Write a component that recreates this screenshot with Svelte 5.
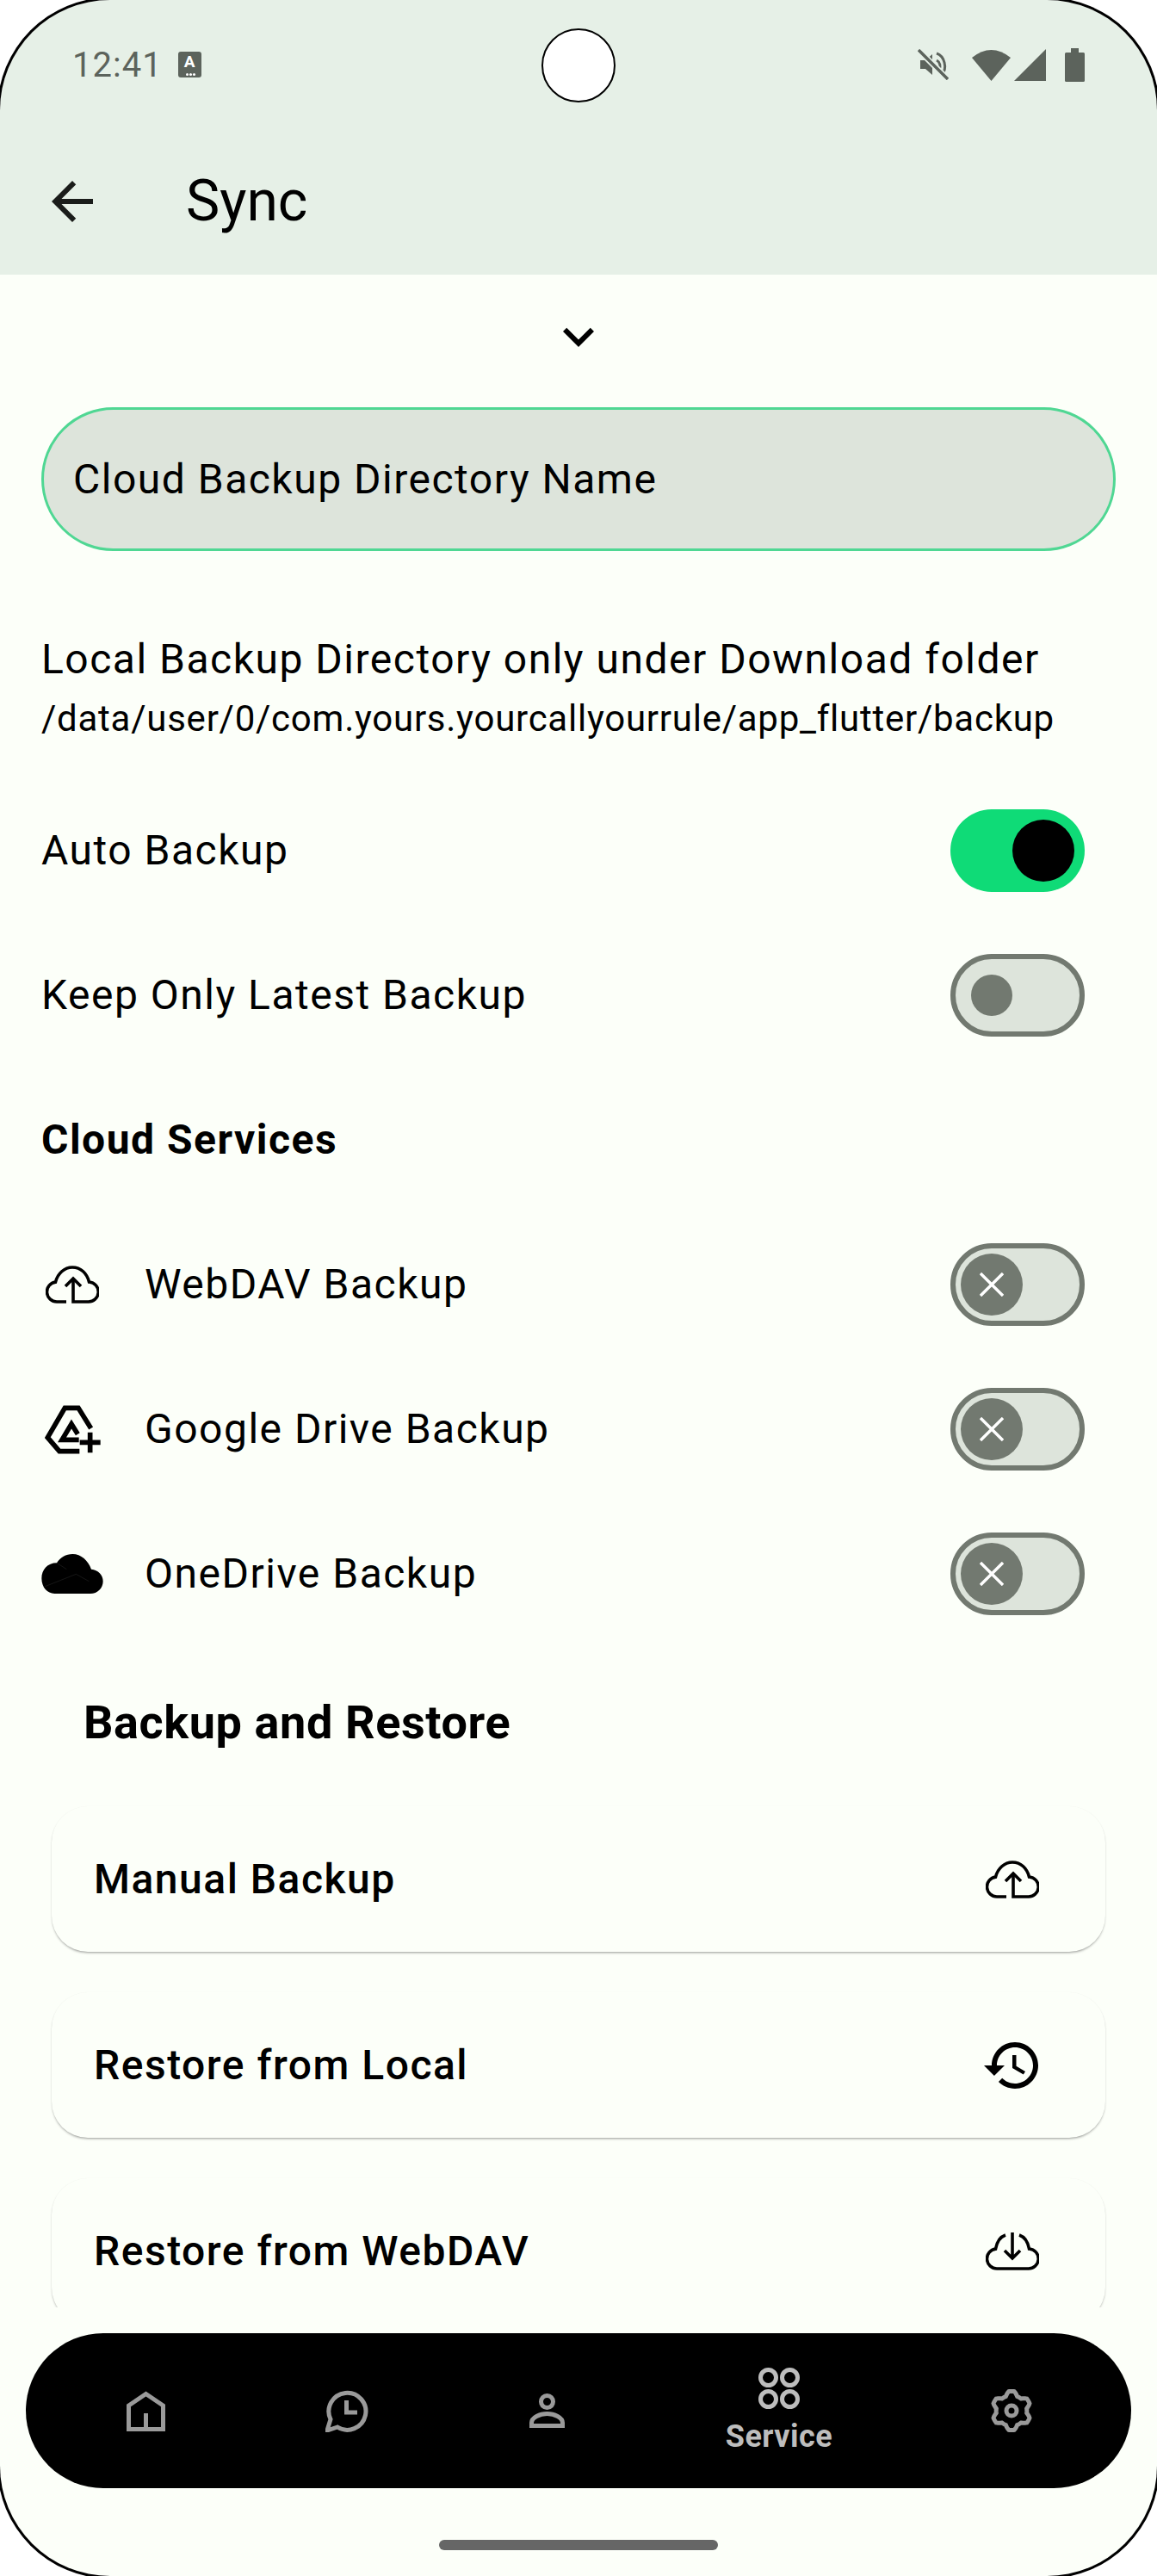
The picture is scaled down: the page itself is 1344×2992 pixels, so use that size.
<script lang="ts">
	const rows = [
		{ label: 'WebDAV Backup', icon: 'webdav' },
		{ label: 'Google Drive Backup', icon: 'drive' },
		{ label: 'OneDrive Backup', icon: 'onedrive' }
	];
	const cards = [
		{ label: 'Manual Backup', icon: 'up' },
		{ label: 'Restore from Local', icon: 'history' },
		{ label: 'Restore from WebDAV', icon: 'down' }
	];

	// gear outline: six flat-topped lobes round a circle
	function gearPath() {
		let d = '';
		for (let i = 0; i <= 180; i++) {
			const t = (i / 180) * Math.PI * 2;
			const r = 20.2 + 2.4 * Math.max(-1, Math.min(1, 1.5 * Math.cos(6 * t)));
			const x = 24 + r * Math.sin(t);
			const y = 25 - r * Math.cos(t);
			d += (i ? 'L' : 'M') + x.toFixed(2) + ' ' + y.toFixed(2);
		}
		return d + 'Z';
	}
</script>

{#snippet cloudUp()}
	<svg class="cloud" viewBox="0 0 62 44" fill="none" stroke="#000" stroke-width="3.6">
		<path d="M24 42H13A11.5 11.5 0 0 1 11.5 19.1C14 9 22 2 31 2C41 2 48 9 50.5 19A11.5 11.5 0 0 1 49 42H32V15" />
		<path d="M23 24L32 15L41 24" />
	</svg>
{/snippet}

<div class="screen">
	<header class="top">
		<div class="status">
			<span class="time">12:41</span>
			<span class="a-badge">A<i></i></span>
			<div class="status-icons">
				<svg class="s-mute" viewBox="0 0 36 36" fill="none" stroke="#5c635c">
					<path d="M3 13H9L17 6V30L9 23H3Z" fill="#5c635c" stroke="none" />
					<path d="M22 5C31 8 35 22 28 30M22 13C26 15 27 20 25 24" stroke-width="3" />
					<path d="M1 1L35 35" stroke="#e6f0e7" stroke-width="7" />
					<path d="M1 1L35 35" stroke-width="3.4" />
				</svg>
				<svg class="s-wifi" viewBox="0 0 45 38"><path d="M22.5 38L0 11Q22.5 -7 45 11Z" fill="#5c635c" /></svg>
				<svg class="s-signal" viewBox="0 0 37 37"><path d="M37 0V37H0Z" fill="#5c635c" /></svg>
				<svg class="s-batt" viewBox="0 0 23 39"><path d="M7 0H16V5H21.5Q23 5 23 6.5V37.5Q23 39 21.5 39H1.5Q0 39 0 37.5V6.5Q0 5 1.5 5H7Z" fill="#5c635c" /></svg>
			</div>
		</div>
		<div class="appbar">
			<svg class="back" viewBox="0 0 24 24"><path d="M20 11H7.83l5.59-5.59L12 4l-8 8 8 8 1.41-1.41L7.83 13H20v-2z" fill="#1a1c1a" /></svg>
			<h1>Sync</h1>
		</div>
	</header>

	<main class="body">
		<div class="chev">
			<svg viewBox="0 0 24 24"><path d="M7.41 8.59 12 13.17l4.59-4.58L18 10l-6 6-6-6 1.41-1.41z" fill="#000" /></svg>
		</div>

		<div class="field">Cloud Backup Directory Name</div>

		<div class="local">
			<p class="l1">Local Backup Directory only under Download folder</p>
			<p class="l2">/data/user/0/com.yours.yourcallyourrule/app_flutter/backup</p>
		</div>

		<div class="row">
			<span class="label">Auto Backup</span>
			<span class="sw on"><b></b></span>
		</div>
		<div class="row">
			<span class="label">Keep Only Latest Backup</span>
			<span class="sw off"><b></b></span>
		</div>
		<div class="row"><span class="label strong">Cloud Services</span></div>

		{#each rows as r}
			<div class="row">
				<span class="slot">
					{#if r.icon === 'webdav'}
						{@render cloudUp()}
					{:else if r.icon === 'drive'}
						<svg class="drive" viewBox="97 637 195 171" fill="none" stroke="#000" stroke-width="17">
							<path d="M218 798H148L107 750L167 647H214L258 718" />
							<path d="M216 758H157L190 703L212 738" />
							<path d="M255 732V803M219 767H291" />
						</svg>
					{:else}
						<svg class="onedrive" viewBox="85 1152 214 138">
							<path d="M130 1290H255C280 1290 299 1270 299 1247C299 1225 282 1207 258 1205C248 1175 222 1152 193 1152C170 1152 150 1163 138 1183C105 1183 85 1207 85 1237C85 1268 105 1290 130 1290Z" fill="#000" />
							<path d="M97 1265L205 1222L250 1247M138 1183L172 1205" fill="none" stroke="#2c2c2c" stroke-width="1.5" />
						</svg>
					{/if}
				</span>
				<span class="label">{r.label}</span>
				<span class="sw cross">
					<b>
						<svg viewBox="0 0 28 28" fill="none" stroke="#fff" stroke-width="3.4"><path d="M1 1L27 27M27 1L1 27" /></svg>
					</b>
				</span>
			</div>
		{/each}

		<h2>Backup and Restore</h2>

		<div class="cards">
			{#each cards as c}
				<div class="card">
					<span>{c.label}</span>
					<span class="card-icon">
						{#if c.icon === 'up'}
							{@render cloudUp()}
						{:else if c.icon === 'history'}
							<svg class="hist" viewBox="0 0 24 24"><path d="M13 3c-4.97 0-9 4.03-9 9H1l3.89 3.89.07.14L9 12H6c0-3.87 3.13-7 7-7s7 3.13 7 7-3.13 7-7 7c-1.93 0-3.68-.79-4.94-2.06l-1.42 1.42C8.27 19.99 10.51 21 13 21c4.97 0 9-4.03 9-9s-4.03-9-9-9zm-1 5v5l4.28 2.54.72-1.21-3.5-2.08V8H12z" fill="#000" /></svg>
						{:else}
							<svg class="cloud" viewBox="0 0 62 44" fill="none" stroke="#000" stroke-width="3.6">
								<path d="M23 3C17 5 13 11 11.5 19.1A11.5 11.5 0 0 0 13 42H49A11.5 11.5 0 0 0 50.5 19C49 11 45 5 39 3" />
								<path d="M31 0V29M22 21L31 30L40 21" />
							</svg>
						{/if}
					</span>
				</div>
			{/each}
		</div>
	</main>

	<nav class="nav">
		<div class="nav-item">
			<svg class="n-home" viewBox="0 0 45 47" fill="none" stroke="#9a9a9a" stroke-width="5"><path d="M2.5 44.5V17L22.5 3.5L42.5 17V44.5ZM22.5 44.5V26" /></svg>
		</div>
		<div class="nav-item">
			<svg class="n-chat" viewBox="0 0 50 50" fill="none" stroke="#9a9a9a" stroke-width="5"><path d="M14 44L2 48L6 35A21.5 21.5 0 1 1 14 44ZM24.5 13V27H37" /></svg>
		</div>
		<div class="nav-item">
			<svg class="n-user" viewBox="0 0 41 40" fill="none" stroke="#9a9a9a" stroke-width="5">
				<circle cx="20.5" cy="9.5" r="7" />
				<path d="M2.5 37.5V34C2.5 28 12 23.5 20.5 23.5S38.5 28 38.5 34V37.5Z" />
			</svg>
		</div>
		<div class="nav-item active">
			<svg class="n-svc" viewBox="0 0 48 48" fill="none" stroke="#bdbdbd" stroke-width="5">
				<circle cx="11.5" cy="11.5" r="9" /><circle cx="36.5" cy="11.5" r="9" />
				<circle cx="11.5" cy="36.5" r="9" /><circle cx="36.5" cy="36.5" r="9" />
			</svg>
			<span>Service</span>
		</div>
		<div class="nav-item">
			<svg class="n-gear" viewBox="0 0 48 50" fill="none" stroke="#9a9a9a" stroke-width="5">
				<path d={gearPath()} />
				<circle cx="24" cy="25" r="6" />
			</svg>
		</div>
	</nav>

	<div class="home-bar"><i></i></div>

	<!-- display cut-out and rounded corners sit over the page -->
	<div class="camera" aria-hidden="true"></div>
	<div class="bezel" aria-hidden="true"></div>
</div>

<style>
	:global(body) { margin: 0; background: #fff; }

	.screen {
		position: relative;
		width: 1344px;
		height: 2992px;
		overflow: hidden;
		background: #fcfff9;
		font-family: Roboto, "Noto Sans", sans-serif;
		color: #000;
		display: flex;
		flex-direction: column;
	}

	/* ── Top ── */
	.top { background: #e6f0e7; height: 319px; flex: none; }
	.status {
		height: 150px;
		display: flex;
		align-items: center;
		padding: 0 84px 0 84px;
	}
	.time { font-size: 40px; color: #5c635c; letter-spacing: 1px; }
	.a-badge {
		position: relative;
		margin-left: 18px;
		width: 27px;
		height: 30px;
		border-radius: 3px;
		background: #5c635c;
		color: #fff;
		font-size: 19px;
		font-weight: 700;
		line-height: 24px;
		text-align: center;
	}
	.a-badge i {
		position: absolute;
		left: 9px;
		bottom: 2px;
		width: 3px;
		height: 3px;
		background: #fff;
		box-shadow: 4px 0 0 #fff, 8px 0 0 #fff;
		border-radius: 50%;
	}
	.status-icons { margin-left: auto; display: flex; align-items: center; }
	.s-mute { width: 36px; height: 36px; margin-right: 27px; }
	.s-wifi { width: 45px; height: 38px; margin-right: 4px; }
	.s-signal { width: 37px; height: 37px; margin-right: 22px; }
	.s-batt { width: 23px; height: 39px; }

	.appbar { height: 169px; display: flex; align-items: center; padding: 0 0 0 48px; margin-top: -1px; }
	.back { width: 72px; height: 72px; }
	h1 { margin: 0 0 0 96px; font-size: 66px; font-weight: 400; line-height: 1; }

	/* ── Scroll body ── */
	.body { height: 2361px; flex: none; overflow: hidden; }
	.chev { height: 72px; margin-top: 36px; display: flex; justify-content: center; }
	.chev svg { width: 72px; height: 72px; }

	.field {
		box-sizing: border-box;
		height: 167px;
		margin: 46px 48px 0;
		padding-left: 34px;
		border: 3px solid #4fd793;
		border-radius: 84px;
		background: #dde4db;
		display: flex;
		align-items: center;
		font-size: 48px;
		letter-spacing: 1.5px;
	}

	.local { margin: 91px 48px 35px; }
	.local p { margin: 0; white-space: nowrap; }
	.l1 { font-size: 48px; line-height: 69px; letter-spacing: 1.5px; }
	.l2 { font-size: 42px; line-height: 69px; letter-spacing: 0.75px; }

	.row {
		height: 168px;
		padding: 0 84px 0 48px;
		display: flex;
		align-items: center;
	}
	.label { font-size: 48px; letter-spacing: 1.5px; padding-bottom: 2px; }
	.strong { font-weight: 700; }
	.slot {
		width: 72px;
		margin-right: 48px;
		display: flex;
		justify-content: center;
	}
	.cloud { width: 62px; height: 44px; }
	.drive { width: 65px; height: 57px; }
	.onedrive { width: 72px; height: 46px; }

	.sw {
		box-sizing: border-box;
		margin-left: auto;
		width: 156px;
		height: 96px;
		border-radius: 48px;
		display: flex;
		align-items: center;
	}
	.sw b { display: flex; align-items: center; justify-content: center; border-radius: 50%; }
	.sw.on { background: #0fdb77; justify-content: flex-end; padding-right: 12px; }
	.sw.on b { width: 72px; height: 72px; background: #000; }
	.sw.off, .sw.cross { background: #dde4db; border: 6px solid #727970; }
	.sw.off { padding-left: 18px; }
	.sw.off b { width: 48px; height: 48px; background: #727970; }
	.sw.cross { padding-left: 6px; }
	.sw.cross b { width: 72px; height: 72px; background: #727970; }
	.sw.cross svg { width: 28px; height: 28px; }

	h2 {
		margin: 0 0 10px 97px;
		height: 176px;
		display: flex;
		align-items: center;
		font-size: 54px;
		font-weight: 700;
		letter-spacing: 0.6px;
	}

	.cards { display: flex; flex-direction: column; gap: 47px; margin: 0 60px; }
	.card {
		height: 169px;
		flex: none;
		padding: 0 72px 0 49px;
		border-radius: 42px;
		background: #fcfff9;
		box-shadow: 0 2px 3px -1px rgba(0, 0, 0, 0.4), 0 0 1px rgba(0, 0, 0, 0.05);
		display: flex;
		align-items: center;
		justify-content: space-between;
		font-size: 48px;
		font-weight: 500;
		letter-spacing: 1.5px;
	}
	.card-icon { width: 72px; display: flex; justify-content: center; }
	.hist { width: 72px; height: 72px; }

	/* ── Bottom nav ── */
	.nav {
		flex: none;
		height: 180px;
		margin: 30px 30px 0;
		padding: 0 23px;
		border-radius: 90px;
		background: #000;
		display: grid;
		grid-template-columns: 233px 233px 233px 306px 233px;
	}
	.nav-item { display: flex; flex-direction: column; align-items: center; justify-content: center; }
	.nav-item span {
		font-size: 36px;
		font-weight: 700;
		line-height: 40px;
		margin-top: 12px;
		color: #bdbdbd;
		letter-spacing: 0.5px;
	}
	.n-home { width: 45px; height: 47px; }
	.n-chat { width: 50px; height: 50px; }
	.n-user { width: 41px; height: 40px; }
	.n-svc { width: 48px; height: 48px; }
	.n-gear { width: 48px; height: 50px; }

	.home-bar { flex: 1; display: flex; justify-content: center; padding-top: 60px; }
	.home-bar i { width: 324px; height: 12px; border-radius: 6px; background: #666; }

	/* ── Overlays ── */
	.camera {
		position: absolute;
		left: 629px;
		top: 33px;
		width: 86px;
		height: 86px;
		box-sizing: border-box;
		border: 2px solid #000;
		border-radius: 50%;
		background: #fff;
	}
	.bezel {
		position: absolute;
		inset: 0;
		border-radius: 128px;
		box-shadow: 0 0 0 3px #000, 0 0 0 300px #fff;
		pointer-events: none;
	}
</style>
